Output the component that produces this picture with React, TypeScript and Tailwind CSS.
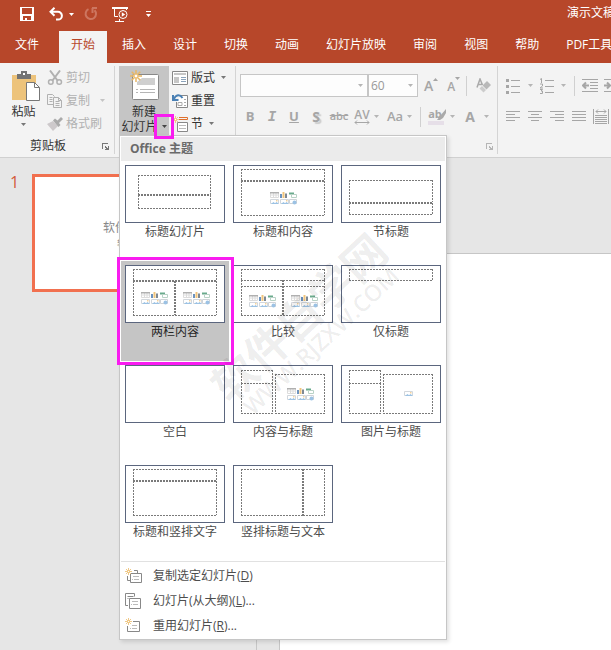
import type { ReactNode } from 'react';

type Box = [x: number, y: number, right: number, bottom: number];

interface SlideLayout {
  name: string;
  boxes: Box[];
  contentIcons?: [number, number][];
  pictureIcon?: [number, number];
}

const tabs = ['文件', '开始', '插入', '设计', '切换', '动画', '幻灯片放映', '审阅', '视图', '帮助', 'PDF工具集'];

const layouts: SlideLayout[] = [
  { name: '标题幻灯片', boxes: [[13, 10, 85, 29], [13, 30, 85, 43]] },
  { name: '标题和内容', boxes: [[8, 4, 91, 15], [8, 16, 91, 50]], contentIcons: [[37, 27]] },
  { name: '节标题', boxes: [[8, 15, 91, 37], [8, 38, 91, 49]] },
  {
    name: '两栏内容',
    boxes: [[8, 4, 91, 15], [8, 16, 49, 50], [50, 16, 91, 50]],
    contentIcons: [[16, 27], [58, 27]],
  },
  {
    name: '比较',
    boxes: [[8, 4, 91, 15], [8, 15, 49, 21], [50, 15, 91, 21], [8, 21, 49, 50], [50, 21, 91, 50]],
    contentIcons: [[16, 30], [58, 30]],
  },
  { name: '仅标题', boxes: [[8, 4, 91, 15]] },
  { name: '空白', boxes: [] },
  {
    name: '内容与标题',
    boxes: [[8, 5, 39, 18], [8, 18, 39, 48], [42, 9, 91, 48]],
    contentIcons: [[54, 23]],
  },
  {
    name: '图片与标题',
    boxes: [[8, 5, 39, 18], [8, 18, 39, 48], [42, 9, 91, 48]],
    pictureIcon: [63, 26],
  },
  { name: '标题和竖排文字', boxes: [[8, 4, 91, 15], [8, 16, 91, 50]] },
  { name: '竖排标题与文本', boxes: [[8, 4, 69, 50], [70, 4, 91, 50]] },
];

function Caret({ className = 'text-[#777]' }: { className?: string }) {
  return (
    <svg className={`h-[3px] w-[5px] shrink-0 ${className}`} viewBox="0 0 5 3" fill="currentColor">
      <path d="M0 0h5L2.500 3z" />
    </svg>
  );
}

function Launcher({ className = 'text-[#777]' }: { className?: string }) {
  return (
    <button type="button" aria-label="更多选项" className={className}>
      <svg className="size-[7px]" viewBox="0 0 7 7" fill="currentColor" shapeRendering="crispEdges">
        <path d="M0 0h6v1H1v5H0zM3 3h1v1h1v1h1V3h1v4H3V6h1V5H3z" />
      </svg>
    </button>
  );
}

function Divider() {
  return <span className="h-5 w-px bg-[#d0d0d0]" />;
}

function PictureGlyph({ x, y }: { x: number; y: number }) {
  return (
    <g transform={`translate(${x} ${y})`}>
      <path d="M.5 .5h8v4h-8z" fill="#fff" stroke="#d2d7dc" />
      <path d="M1 5l2.500-2L5 4.200 6.500 3 9 5z" fill="#9cc2e4" />
      <path d="M6 1h1.500v1.500H6z" fill="#f5d39c" />
    </g>
  );
}

function ContentGlyphs({ x, y }: { x: number; y: number }) {
  return (
    <g transform={`translate(${x} ${y})`}>
      <path d="M.5 .5h8v5h-8zM.5 3h8M3.500 1v5M6 1v5" fill="none" stroke="#dcdcdc" />
      <path d="M0 0h9v1.500H0z" fill="#b0b0b0" />
      <path d="M10 2h2v4h-2z" fill="#6c93bf" />
      <path d="M12.500 0h2v6h-2z" fill="#f0c47c" />
      <path d="M15 1.500h2V6h-2z" fill="#7d8894" />
      <path d="M19 .5h5v2h-5z" fill="#69aa8c" />
      <path d="M21.500 2.500h5v3h-5z" fill="#fff" stroke="#b9d2c6" />
      <PictureGlyph x={0} y={7} />
      <PictureGlyph x={10} y={7} />
      <path d="M19.500 7.500h7v4h-7z" fill="#fff" stroke="#cfd3d7" />
      <circle cx="24.500" cy="10.500" r="2" fill="#9cc2e4" />
    </g>
  );
}

function LayoutThumb({ layout }: { layout: SlideLayout }) {
  return (
    <svg className="h-[58px] w-[100px]" viewBox="0 0 100 58">
      <rect x=".5" y=".5" width="99" height="57" fill="#fff" stroke="#5b667e" />
      {layout.boxes.map(([x, y, right, bottom]) => (
        <path
          key={`${x}-${y}`}
          d={`M${x} ${y + 0.5}H${right + 1}M${x} ${bottom + 0.5}H${right + 1}M${x + 0.5} ${y}V${bottom}M${right + 0.5} ${y}V${bottom}`}
          fill="none"
          stroke="#7a7a7a"
          strokeDasharray="2 1"
        />
      ))}
      {layout.contentIcons?.map(([x, y]) => <ContentGlyphs key={x} x={x} y={y} />)}
      {layout.pictureIcon ? <PictureGlyph x={layout.pictureIcon[0]} y={layout.pictureIcon[1]} /> : null}
    </svg>
  );
}

function Spark() {
  return (
    <>
      <path d="M3.500 0v7M0 3.500h7M1 1l5 5M6 1L1 6" stroke="#f0c988" fill="none" />
      <path d="M3 3h1v1H3z" fill="#fff" />
    </>
  );
}

function QuickAccess() {
  return (
    <header className="flex h-[31px] items-center pb-[3px] pl-5 text-white">
      <button type="button" aria-label="保存">
        <svg className="size-[14px]" viewBox="0 0 14 14" fill="currentColor" shapeRendering="crispEdges">
          <path fillRule="evenodd" d="M0 0h14v14H0zM2 1v6h10V1zM3 9v4h2v-2h2v2h4V9z" />
        </svg>
      </button>
      <button type="button" aria-label="撤消" className="ml-[15px] flex items-center gap-1.5">
        <svg className="h-[14px] w-[14px]" viewBox="0 0 14 14" fill="none" stroke="currentColor" strokeWidth="2">
          <path d="M5.500 0.800L1.500 4.800L5.500 8.800M1.500 4.800H9a3.800 3.800 0 0 1 0 7.800H7" />
        </svg>
        <Caret className="text-white" />
      </button>
      <button type="button" aria-label="重复" disabled className="ml-[10px] text-[#cd7660]">
        <svg className="size-[14px]" viewBox="0 0 14 14" fill="none" stroke="currentColor" strokeWidth="2">
          <path d="M4.500 2.200A5.200 5.200 0 1 0 10.500 3.200" />
          <path d="M8 1h5M8.500 1v5" />
        </svg>
      </button>
      <button type="button" aria-label="从头开始" className="ml-[14px]">
        <svg className="h-[15px] w-4" viewBox="0 0 16 15" fill="none" stroke="currentColor">
          <path d="M0 1h16" strokeWidth="2" />
          <path d="M2.500 2v7.500H6M3 14.500h9M7.500 12v2.500M14.500 2v1" />
          <circle cx="11" cy="7.500" r="4" />
          <path d="M9.800 5.200v4.600l3.400-2.300z" fill="currentColor" stroke="none" />
        </svg>
      </button>
      <button type="button" aria-label="自定义快速访问工具栏" className="ml-[18px]">
        <svg className="h-[7px] w-[5px]" viewBox="0 0 5 7" fill="currentColor">
          <path d="M0 0h5v1H0zM0 3h5L2.500 6z" />
        </svg>
      </button>
      <span className="ml-auto w-11 overflow-hidden pb-[3px] leading-4 whitespace-nowrap">演示文稿</span>
    </header>
  );
}

function TabStrip() {
  return (
    <nav className="flex h-8 gap-[3px] overflow-hidden pl-[3px] text-white">
      {tabs.map((tab) => (
        <button
          type="button"
          key={tab}
          className={
            tab === '开始'
              ? 'ml-[5px] shrink-0 bg-[#f3f3f3] px-3 pb-1 leading-4 text-[#b7472a]'
              : 'shrink-0 px-3 pb-1 leading-4 whitespace-nowrap'
          }
        >
          {tab}
        </button>
      ))}
    </nav>
  );
}

function SmallButton({ icon, label, menu, disabled }: { icon: ReactNode; label: string; menu?: boolean; disabled?: boolean }) {
  return (
    <button
      type="button"
      disabled={disabled}
      className={
        disabled
          ? 'flex h-[23px] items-center gap-[3px] whitespace-nowrap text-[#b1b1b1]'
          : 'flex h-[23px] items-center gap-[3px] whitespace-nowrap text-[#333]'
      }
    >
      {icon}
      <span>{label}</span>
      {menu ? <span className="pl-[3px]"><Caret className={disabled ? 'ml-1 text-[#c4c4c4]' : 'text-[#777]'} /></span> : null}
    </button>
  );
}

function ClipboardGroup() {
  return (
    <section className="flex w-[115px] shrink-0 flex-col border-r border-[#d4d4d4]">
      <div className="flex h-[72px]">
        <button type="button" className="flex w-[47px] flex-col items-center pt-[5px]">
          <svg className="h-[30px] w-8" viewBox="0 0 32 30">
            <path d="M4 4h24v25H4z" fill="#edc37b" />
            <path d="M9 3h4V0h6v3h4v5H9z" fill="#737373" />
            <path d="M15 2h2v2h-2z" fill="#fff" />
            <path d="M18.500 11.500h8l5 5v13h-13z" fill="#fff" stroke="#777" />
            <path d="M26.500 11.500v5h5" fill="none" stroke="#777" />
          </svg>
          <span className="mt-[2px] leading-[18px]">粘贴</span>
          <span className="mt-[2px] flex"><Caret /></span>
        </button>
        <div>
          <SmallButton
            disabled
            label="剪切"
            icon={
              <svg className="size-4" viewBox="0 0 16 16" fill="none" stroke="currentColor">
                <path d="M3 0.500L10.500 10.500M13 0.500L5.500 10.500" strokeWidth="2" />
                <circle cx="3.800" cy="12" r="2.300" strokeWidth="1.500" />
                <circle cx="12.200" cy="12" r="2.300" strokeWidth="1.500" />
              </svg>
            }
          />
          <SmallButton
            disabled
            menu
            label="复制"
            icon={
              <svg className="size-4" viewBox="0 0 16 16" fill="none" stroke="currentColor">
                <path d="M6 11.500H.5v-10h5l2 2M2.500 4.500h3M2.500 6.500h3M2.500 8.500h3" />
                <path d="M6.500 4.500h5l3 3v7h-8zM11.500 4.500v3h3M8.500 8.500h4M8.500 10.500h4M8.500 12.500h4" fill="#f3f3f3" />
              </svg>
            }
          />
          <SmallButton
            disabled
            label="格式刷"
            icon={
              <svg className="size-4" viewBox="0 0 16 16">
                <path d="M0 8l6-3 5 5-5 5z" fill="#cdc9cb" />
                <path d="M6 4.500l2-2 2.500 2L14 1l2 2-4 4 1.500 2-2 2z" fill="#aaa" />
              </svg>
            }
          />
        </div>
      </div>
      <div className="flex h-4 items-center justify-between pr-[5px] pl-[30px]">
        <span className="leading-[18px]">剪贴板</span>
        <Launcher />
      </div>
    </section>
  );
}

function LayoutMenu() {
  return (
    <div className="absolute top-[69px] left-0 z-10 w-[328px] border border-[#c6c6c6] bg-white p-px text-[#4d4d4d] shadow-[2px_2px_4px_rgba(0,0,0,0.12)]">
      <h2 className="flex h-6 items-center bg-[#ebebeb] pl-[9px] font-bold text-[#6a6a6a]">Office 主题</h2>
      <div className="grid grid-cols-3">
        {layouts.map((layout) => (
          <button
            type="button"
            key={layout.name}
            className={
              layout.name === '两栏内容'
                ? 'relative flex h-[100px] flex-col items-center bg-[#c5c5c5] pt-1 text-[#262626]'
                : 'flex h-[100px] flex-col items-center pt-1'
            }
          >
            <LayoutThumb layout={layout} />
            <span className="leading-[18px]">{layout.name}</span>
            {layout.name === '两栏内容' ? (
              <span className="absolute -inset-1 -right-[5px] z-10 border-3 border-[#f91cf0]" />
            ) : null}
          </button>
        ))}
      </div>
      <div className="border-t border-[#e1e1e1] pt-px">
        <MenuItem label="复制选定幻灯片" hotkey="D">
          <path d="M9 2.500h3.500V5M2.500 8v4.500H5" fill="none" stroke="#888" />
          <path d="M5.500 5.500h11v9h-11z" fill="#fff" stroke="#888" />
          <path d="M8 8.500h6M9 11.500h5M7 11.500h1" stroke="#bbb" />
          <Spark />
        </MenuItem>
        <MenuItem label="幻灯片(从大纲)" hotkey="L" dots>
          <path d="M.5 .5h9v3M.5 .5v12H3M2.500 3.500h6M2.500 5.500h1" fill="none" stroke="#888" />
          <path d="M4.500 5.500h11v10h-11z" fill="#fff" stroke="#888" />
          <path d="M7 8.500h6M8 11.500h5M6 11.500h1" stroke="#bbb" />
        </MenuItem>
        <MenuItem label="重用幻灯片" hotkey="R" dots>
          <path d="M8 3.500h6.500v10h-12V8" fill="none" stroke="#888" />
          <path d="M7 7.500h5M7 10.500h5M5 10.500h1" stroke="#bbb" />
          <Spark />
        </MenuItem>
      </div>
    </div>
  );
}

function MenuItem({ label, hotkey, dots, children }: { label: string; hotkey: string; dots?: boolean; children: ReactNode }) {
  return (
    <button type="button" className="flex h-[25px] w-full items-center gap-[11px] pl-1 text-left">
      <svg className="h-4 w-[17px]" viewBox="0 0 17 16">{children}</svg>
      <span>
        {label}(<u>{hotkey}</u>){dots ? '...' : ''}
      </span>
    </button>
  );
}

function SlidesGroup() {
  return (
    <section className="flex w-[121px] shrink-0 border-r border-[#d4d4d4] pl-1">
      <div className="relative">
        <button type="button" className="flex h-[72px] w-[50px] flex-col items-center bg-[#c5c5c5] pt-1 text-[#333]">
          <svg className="h-[30px] w-8" viewBox="0 0 32 30">
            <rect x="4.500" y="4.500" width="26" height="25" rx="1" fill="#fff" stroke="#888" />
            <path d="M14 8h13v7H9v-3z" fill="#cfcfcf" />
            <path d="M8 19.500h2M12 19.500h15M8 22.500h2M12 22.500h15" stroke="#b5b5b5" />
            <path d="M8 0v12M2 6h12M3.700 1.700l8.600 8.600M12.300 1.700L3.700 10.300" stroke="#e8b765" strokeWidth="1.500" />
            <circle cx="8" cy="6" r="2" fill="#fff" stroke="#e8b765" />
          </svg>
          <span className="mt-1 leading-[15px]">新建</span>
          <span className="flex items-center gap-1 leading-[15px] whitespace-nowrap">幻灯片<Caret className="text-[#444]" /></span>
        </button>
        <span className="absolute top-12 left-[35px] z-20 h-[25px] w-5 border-3 border-[#f91cf0]" />
        <LayoutMenu />
      </div>
      <div className="pl-[3px]">
        <SmallButton
          menu
          label="版式"
          icon={
            <svg className="size-4" viewBox="0 0 16 16" fill="none">
              <path d="M.5 1.500h15v13H.5z" fill="#fff" stroke="#888" />
              <path d="M2 3h12v2H2zM2 7h5v6H2z" fill="#c6c6c6" />
              <path d="M9 7.500h5M9 9.500h5M9 11.500h5" stroke="#8ba3bb" />
            </svg>
          }
        />
        <SmallButton
          label="重置"
          icon={
            <svg className="size-4" viewBox="0 0 16 16" fill="none">
              <path d="M9 2.500h6.500v12h-11V9" fill="#fff" stroke="#888" />
              <path d="M12 6.500h2M6 9.500h4v3H6zM12 9.500h2M12 12.500h2" stroke="#aaa" />
              <path d="M1 2v5h5.500M1.500 6.500C4 1 8 1 10.500 5" stroke="#4a80b4" strokeWidth="2" />
            </svg>
          }
        />
        <SmallButton
          menu
          label="节"
          icon={
            <svg className="size-4" viewBox="0 0 16 16" fill="none">
              <path d="M7 1.500h8.500v2H7" stroke="#e0702c" />
              <path d="M5.500 6.500h10v9h-10z" fill="#fff" stroke="#888" />
              <path d="M7 9.500h7M7 12.500h7" stroke="#bbb" />
              <Spark />
            </svg>
          }
        />
      </div>
    </section>
  );
}

function FontGroup() {
  return (
    <section className="flex w-[262px] shrink-0 flex-col border-r border-[#d4d4d4] text-[#a6a6a6]">
      <div className="flex h-[72px] flex-col gap-2 pt-2">
        <div className="flex h-[23px] items-center pl-1">
          <label className="relative flex items-center">
            <select aria-label="字体" disabled className="h-[23px] w-32 appearance-none border border-[#c6c6c6] bg-[#fdfdfd] opacity-100">
              <option></option>
            </select>
            <span className="absolute right-[5px]"><Caret className="text-[#b5b5b5]" /></span>
          </label>
          <label className="relative flex items-center">
            <select aria-label="字号" disabled className="h-[23px] w-[50px] appearance-none border border-[#c6c6c6] bg-[#fdfdfd] pl-[2px] text-xs text-[#999] opacity-100">
              <option>60</option>
            </select>
            <span className="absolute right-[5px]"><Caret className="text-[#b5b5b5]" /></span>
          </label>
          <button type="button" aria-label="增大字号" className="ml-[6px] flex text-sm leading-5 font-semibold">
            A<svg className="mt-[2px] h-[3px] w-[5px]" viewBox="0 0 5 3" fill="currentColor"><path d="M0 3h5L2.500 0z" /></svg>
          </button>
          <button type="button" aria-label="减小字号" className="ml-[9px] flex pt-[2px] text-xs leading-5 font-semibold">
            A<Caret className="text-[#a6a6a6]" />
          </button>
          <span className="ml-[6px] flex"><Divider /></span>
          <button type="button" aria-label="清除格式" className="ml-[9px]">
            <svg className="size-4" viewBox="0 0 16 16" fill="none">
              <path d="M1 9.500L4 1l2.500 6M2 6.500h4" stroke="#aaa" strokeWidth="1.500" />
              <path d="M11 3l4 4-4.500 4.500-4-4z" fill="#b9b9b9" />
              <path d="M6 8l4 4-2.500 2.500-4-4z" fill="#ccc" />
            </svg>
          </button>
        </div>
        <div className="flex h-[23px] items-center pl-[3px]">
          <button type="button" className="w-[22px] text-[13px] font-bold">B</button>
          <button type="button" className="w-[22px] font-['Liberation_Mono'] text-sm font-bold italic">I</button>
          <button type="button" className="w-[22px] text-[13px] font-bold underline">U</button>
          <button type="button" className="w-[22px] text-sm font-bold text-shadow-[2px_2px_1px_#ccc]">S</button>
          <button type="button" className="w-6 text-[11px] font-semibold line-through">abc</button>
          <button type="button" aria-label="字符间距" className="ml-[3px] flex items-center gap-1">
            <span className="flex w-4 flex-col items-center">
              <span className="text-xs leading-[11px] font-semibold">AV</span>
              <svg className="h-[5px] w-4" viewBox="0 0 16 5" fill="none" stroke="currentColor">
                <path d="M1 2.500h14M3 .5l-2 2 2 2M13 .5l2 2-2 2" />
              </svg>
            </span>
            <Caret className="text-[#b5b5b5]" />
          </button>
          <button type="button" className="ml-2 flex items-center gap-1 text-[13px] font-semibold">
            Aa<Caret className="text-[#b5b5b5]" />
          </button>
          <span className="ml-2 flex"><Divider /></span>
          <button type="button" aria-label="文本突出显示颜色" className="ml-[7px] flex items-center gap-[6px]">
            <span className="flex w-4 flex-col">
              <span className="flex h-3 items-center text-[11px] font-bold">
                ab
                <svg className="-ml-[5px] h-[11px] w-[9px] shrink-0" viewBox="0 0 9 11"><path d="M9 0L3 7l-3 4h3l3-2 3-5z" fill="#aaa" /></svg>
              </span>
              <span className="h-1 bg-[#e6dfe8]" />
            </span>
            <Caret className="text-[#b5b5b5]" />
          </button>
          <button type="button" className="ml-[10px] flex items-center gap-[9px] text-sm font-bold">
            A<Caret className="text-[#b5b5b5]" />
          </button>
        </div>
      </div>
      <div className="flex h-4 items-center justify-end pr-1">
        <Launcher className="text-[#b5b5b5]" />
      </div>
    </section>
  );
}

function LinesIcon({ d }: { d: string }) {
  return (
    <svg className="h-3 w-[14px] shrink-0" viewBox="0 0 14 12" stroke="currentColor" fill="none">
      <path d={d} />
    </svg>
  );
}

function ParagraphGroup() {
  return (
    <section className="flex min-w-0 flex-1 flex-col gap-2 overflow-hidden pt-2 pl-2 text-[#a6a6a6]">
      <div className="flex h-[23px] items-center">
        <button type="button" aria-label="项目符号" className="flex items-center gap-2">
          <svg className="h-4 w-[14px]" viewBox="0 0 14 16" fill="none" stroke="currentColor">
            <path d="M0 2.500h3M0 8.500h3M0 14.500h3" strokeWidth="3" />
            <path d="M5 2.500h9M5 8.500h9M5 14.500h9" />
          </svg>
          <Caret className="text-[#b5b5b5]" />
        </button>
        <button type="button" aria-label="编号" className="ml-[7px] flex items-center gap-[7px]">
          <svg className="h-4 w-[14px]" viewBox="0 0 14 16" fill="none" stroke="currentColor">
            <path d="M0 1.500l1.500-1V5M0 6h2.500v2L0 10h3M0 11.500h2.500L1 13h1.500v2.500H0" />
            <path d="M5 2.500h9M5 8.500h9M5 14.500h9" />
          </svg>
          <Caret className="text-[#b5b5b5]" />
        </button>
        <span className="ml-2 flex"><Divider /></span>
        <button type="button" aria-label="减少缩进" className="ml-[7px] shrink-0">
          <svg className="h-[13px] w-4" viewBox="0 0 16 13" fill="none" stroke="currentColor">
            <path d="M0 .5h16M8 3.500h8M8 6.500h8M8 9.500h8M0 12.500h16" />
            <path d="M7 6.500H1M4 3.500l-3 3 3 3" strokeWidth="2" />
          </svg>
        </button>
        <button type="button" aria-label="增加缩进" className="ml-[6px] shrink-0">
          <svg className="h-[13px] w-4" viewBox="0 0 16 13" fill="none" stroke="currentColor">
            <path d="M0 .5h16M8 3.500h8M8 6.500h8M8 9.500h8M0 12.500h16" />
            <path d="M0 6.500h6M3 3.500l3 3-3 3" strokeWidth="2" />
          </svg>
        </button>
      </div>
      <div className="flex h-[23px] items-center gap-2">
        <button type="button" aria-label="左对齐"><LinesIcon d="M0 .5h14M0 3.500h9M0 6.500h14M0 9.500h9" /></button>
        <button type="button" aria-label="居中"><LinesIcon d="M0 .5h14M3 3.500h8M0 6.500h14M3 9.500h8" /></button>
        <button type="button" aria-label="右对齐"><LinesIcon d="M0 .5h14M5 3.500h9M0 6.500h14M5 9.500h9" /></button>
        <button type="button" aria-label="两端对齐"><LinesIcon d="M0 .5h14M0 3.500h14M0 6.500h14M0 9.500h14" /></button>
        <button type="button" aria-label="分散对齐" className="-ml-px shrink-0">
          <svg className="h-4 w-4" viewBox="0 0 16 16" fill="none" stroke="currentColor">
            <path d="M.5 0v15M15.500 0v15M3 2.500h10M5 .5L3 2.500l2 2M11 .5l2 2-2 2M2 6.500h12M2 8.500h12M2 10.500h12M2 12.500h12M2 14.500h12" />
          </svg>
        </button>
      </div>
    </section>
  );
}

function Workspace() {
  return (
    <main className="flex flex-1">
      <aside className="flex w-[257px] shrink-0 border-r border-[#c6c6c6] pt-4">
        <span className="w-8 pl-[10px] text-base leading-4 text-[#d35a3c]">1</span>
        <div className="flex h-[118px] w-[202px] flex-col items-center border-3 border-[#f1704f] bg-white pt-[42px] text-[#888]">
          <span className="leading-[18px]">软件自学网</span>
          <span className="text-[8px] leading-3">软件自学</span>
        </div>
      </aside>
      <div className="mt-[95px] ml-[22px] flex-1 border-t border-l border-[#c6c6c6] bg-white" />
    </main>
  );
}

export default function App() {
  return (
    <div className="relative flex min-h-screen flex-col overflow-hidden bg-[#e6e6e6] font-['Open_Sans','Noto_Sans_CJK_SC',sans-serif] text-xs text-[#333]">
      <div className="bg-[#b7472a]">
        <QuickAccess />
        <TabStrip />
      </div>
      <div className="flex h-[95px] border-b border-[#d0d0d0] bg-[#f3f3f3] py-[3px]">
        <ClipboardGroup />
        <SlidesGroup />
        <FontGroup />
        <ParagraphGroup />
      </div>
      <Workspace />
      <div className="pointer-events-none absolute top-[326px] left-[307px] z-30 flex -translate-x-1/2 -translate-y-1/2 -rotate-[43deg] flex-col items-center font-bold whitespace-nowrap text-black/8">
        <span className="text-[44px] leading-10">软件自学网</span>
        <span className="text-[23px] leading-6 font-semibold">WWW.RJZXW.COM</span>
      </div>
    </div>
  );
}
